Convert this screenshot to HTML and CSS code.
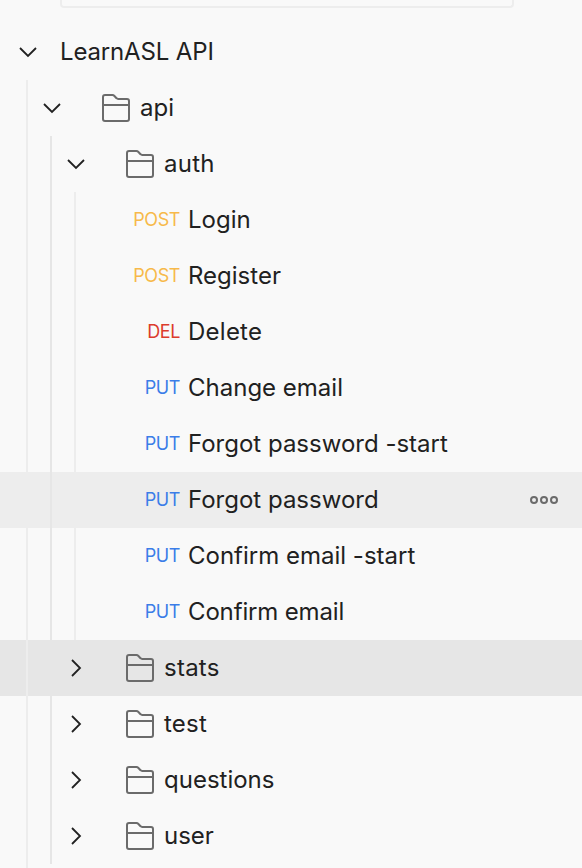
FILE: index.html
```html
<!DOCTYPE html>
<html lang="en">
<head>
<meta charset="utf-8">
<title>LearnASL API</title>
<link rel="stylesheet" href="styles.css">
</head>
<body>
<svg class="defs" width="0" height="0">
  <symbol id="down" viewBox="0 0 24 24"><path d="M4 8l8 8 8-8"/></symbol>
  <symbol id="right" viewBox="0 0 24 24"><path d="M8 4l8 8-8 8"/></symbol>
  <symbol id="folder" viewBox="0 0 30 30"><path d="M2 26V4Q2 2 4 2H11.500Q12.500 2 13.200 2.700L15.500 5.200Q16.200 6 17.200 6H26Q28 6 28 8V26Q28 28 26 28H4Q2 28 2 26ZM2 12H28"/></symbol>
</svg>
<div class="search"></div>
<main class="tree">
  <div class="row l0"><svg class="chev"><use href="#down"/></svg><span class="name tight">LearnASL API</span></div>
  <div class="row l1"><svg class="chev"><use href="#down"/></svg><svg class="folder"><use href="#folder"/></svg><span class="name">api</span></div>
  <div class="row l2"><svg class="chev"><use href="#down"/></svg><svg class="folder"><use href="#folder"/></svg><span class="name loose">auth</span></div>
  <div class="row l3"><span class="method post">POST</span><span class="name">Login</span></div>
  <div class="row l3"><span class="method post">POST</span><span class="name">Register</span></div>
  <div class="row l3"><span class="method del">DEL</span><span class="name loose">Delete</span></div>
  <div class="row l3"><span class="method put">PUT</span><span class="name">Change email</span></div>
  <div class="row l3"><span class="method put">PUT</span><span class="name">Forgot password -start</span></div>
  <div class="row l3 hover"><span class="method put">PUT</span><span class="name">Forgot password</span><svg class="more" viewBox="0 0 30 10"><circle cx="5" cy="5" r="3"/><circle cx="15" cy="5" r="3"/><circle cx="25" cy="5" r="3"/></svg></div>
  <div class="row l3"><span class="method put">PUT</span><span class="name">Confirm email -start</span></div>
  <div class="row l3"><span class="method put">PUT</span><span class="name tight">Confirm email</span></div>
  <div class="row l2 selected"><svg class="chev"><use href="#right"/></svg><svg class="folder"><use href="#folder"/></svg><span class="name loose">stats</span></div>
  <div class="row l2"><svg class="chev"><use href="#right"/></svg><svg class="folder"><use href="#folder"/></svg><span class="name loose">test</span></div>
  <div class="row l2"><svg class="chev"><use href="#right"/></svg><svg class="folder"><use href="#folder"/></svg><span class="name">questions</span></div>
  <div class="row l2"><svg class="chev"><use href="#right"/></svg><svg class="folder"><use href="#folder"/></svg><span class="name">user</span></div>
  <div class="row l1 tail"></div>
</main>
</body>
</html>
```
FILE: styles.css
```css
* { box-sizing: border-box; }
body { margin: 0; height: 868px; overflow: hidden; background: #f9f9f9; color: #212121; font: 24px/56px Inter, sans-serif; font-optical-sizing: none; }
.defs { position: absolute; }
.search { height: 8px; width: 454px; margin: 0 0 16px 60px; border: 2px solid #ededed; border-top: 0; border-radius: 0 0 4px 4px; }
.row { display: flex; align-items: center; height: 56px; white-space: nowrap; background-repeat: no-repeat; }
.l0 { padding-left: 16px; }
.l0 .name { margin-left: 20px; }
.l1 { padding-left: 40px; background-image: linear-gradient(#ededed, #ededed); background-size: 2px 100%; background-position: 26px 0; }
.l2 { padding-left: 64px; background-image: linear-gradient(#ededed, #ededed), linear-gradient(#e6e6e6, #e6e6e6); background-size: 2px 100%; background-position: 26px 0, 50px 0; }
.l3 { background-image: linear-gradient(#ededed, #ededed), linear-gradient(#e6e6e6, #e6e6e6), linear-gradient(#ededed, #ededed); background-size: 2px 100%; background-position: 26px 0, 50px 0, 74px 0; }
.tail { height: 4px; }
.hover { background-color: #ededed; }
.selected { background-color: #e6e6e6; }
.tight { letter-spacing: -0.15px; }
.loose { letter-spacing: 0.25px; }
.chev { width: 24px; height: 24px; flex: none; fill: none; stroke: #212121; stroke-width: 1.8; }
.folder { width: 30px; height: 30px; flex: none; margin: 0 9px 0 37px; fill: none; stroke: #6b6b6b; stroke-width: 2; }
.method { width: 180px; margin-right: 8px; text-align: right; font-size: 18px; letter-spacing: -0.4px; }
.post { color: #f7b94a; }
.del { color: #dc3c2c; }
.put { color: #3b7de8; }
.more { width: 30px; height: 10px; margin: 0 23px 0 auto; fill: none; stroke: #6b6b6b; stroke-width: 2; }
```
